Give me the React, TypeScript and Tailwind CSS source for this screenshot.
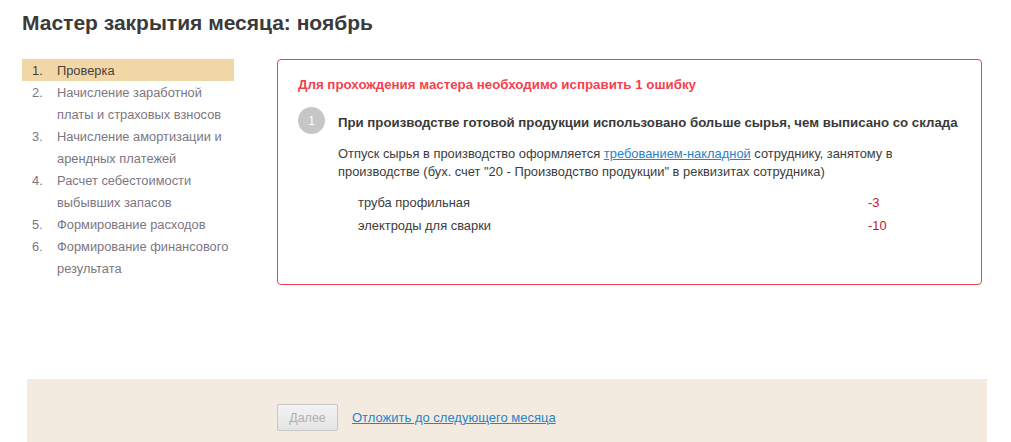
const steps = [
  { n: 1, lines: ["Проверка"], active: true },
  { n: 2, lines: ["Начисление заработной", "платы и страховых взносов"] },
  { n: 3, lines: ["Начисление амортизации и", "арендных платежей"] },
  { n: 4, lines: ["Расчет себестоимости", "выбывших запасов"] },
  { n: 5, lines: ["Формирование расходов"] },
  { n: 6, lines: ["Формирование финансового", "результата"] },
];

const App = () => {
  return (
    <div className="w-[1011px] h-[442px] overflow-hidden bg-white font-['Liberation_Sans',Arial,sans-serif] text-[12.9px] text-[#3c3c3c]">
      <div className="pl-[22px] pr-[29px]">
        <h1 className="pt-[10px] h-[59px] text-[21px] leading-[26px] font-bold text-[#3a3a3a]">
          Мастер закрытия месяца: ноябрь
        </h1>
        <div className="flex h-[320px] items-start">
          <ol className="w-[212px] shrink-0 text-[12.85px] leading-[22px] text-[#7d7680]">
            {steps.map((s) => (
              <li
                key={s.n}
                className={s.active ? "flex h-[22px] pt-[1px] bg-[#f2d7a6] text-[#4a4040]" : "flex pt-[1px] -mb-[1px]"}
              >
                <span className="w-[35px] pl-[10px] shrink-0">{s.n}.</span>
                <span>
                  {s.lines.map((l) => (
                    <span key={l} className="block whitespace-nowrap">{l}</span>
                  ))}
                </span>
              </li>
            ))}
          </ol>
          <div className="ml-[43px] w-[705px] h-[226px] shrink-0 rounded-[4px] border border-[#e8434f] pl-[20px] pt-[17px]">
            <div className="text-[13.3px] leading-[16px] font-bold text-[#f4424e]">
              Для прохождения мастера необходимо исправить 1 ошибку
            </div>
            <div className="mt-[14px] flex">
              <div className="w-[27px] h-[27px] shrink-0 rounded-full bg-[#c6c6c6] text-[12px] text-white flex items-center justify-center">1</div>
              <div className="ml-[13px] flex-1">
                <div className="pt-[8px] text-[13.22px] leading-[16px] font-bold text-[#3a3a3a]">
                  При производстве готовой продукции использовано больше сырья, чем выписано со склада
                </div>
                <p className="mt-[14px] leading-[18px] whitespace-nowrap">
                  <span className="block">
                    Отпуск сырья в производство оформляется{" "}
                    <a className="text-[#2a83c9] underline" href="#">требованием-накладной</a>{" "}
                    сотруднику, занятому в
                  </span>
                  <span className="block">производстве (бух. счет "20 - Производство продукции" в реквизитах сотрудника)</span>
                </p>
                <div className="mt-[10px] leading-[23px]">
                  <div className="flex">
                    <span className="ml-[20px] w-[510px]">труба профильная</span>
                    <span className="text-[#c2183c]">-3</span>
                  </div>
                  <div className="flex">
                    <span className="ml-[20px] w-[510px]">электроды для сварки</span>
                    <span className="text-[#c2183c]">-10</span>
                  </div>
                </div>
              </div>
            </div>
          </div>
        </div>
      </div>
      <div className="ml-[27px] w-[960px] h-[63px] bg-[#f3ebe0] pl-[250px] pt-[25px] flex items-start">
        <button className="h-[27px] w-[61px] pt-[1px] rounded-[2px] border border-[#c6c6c6] bg-gradient-to-b from-[#f3f3f3] to-[#e4e4e4] text-[12.5px] text-[#b0b0b0]">Далее</button>
        <a className="ml-[14px] mt-[6px] text-[13px] text-[#2a83c9] underline leading-[16px]" href="#">Отложить до следующего месяца</a>
      </div>
    </div>
  );
};

export default App;
